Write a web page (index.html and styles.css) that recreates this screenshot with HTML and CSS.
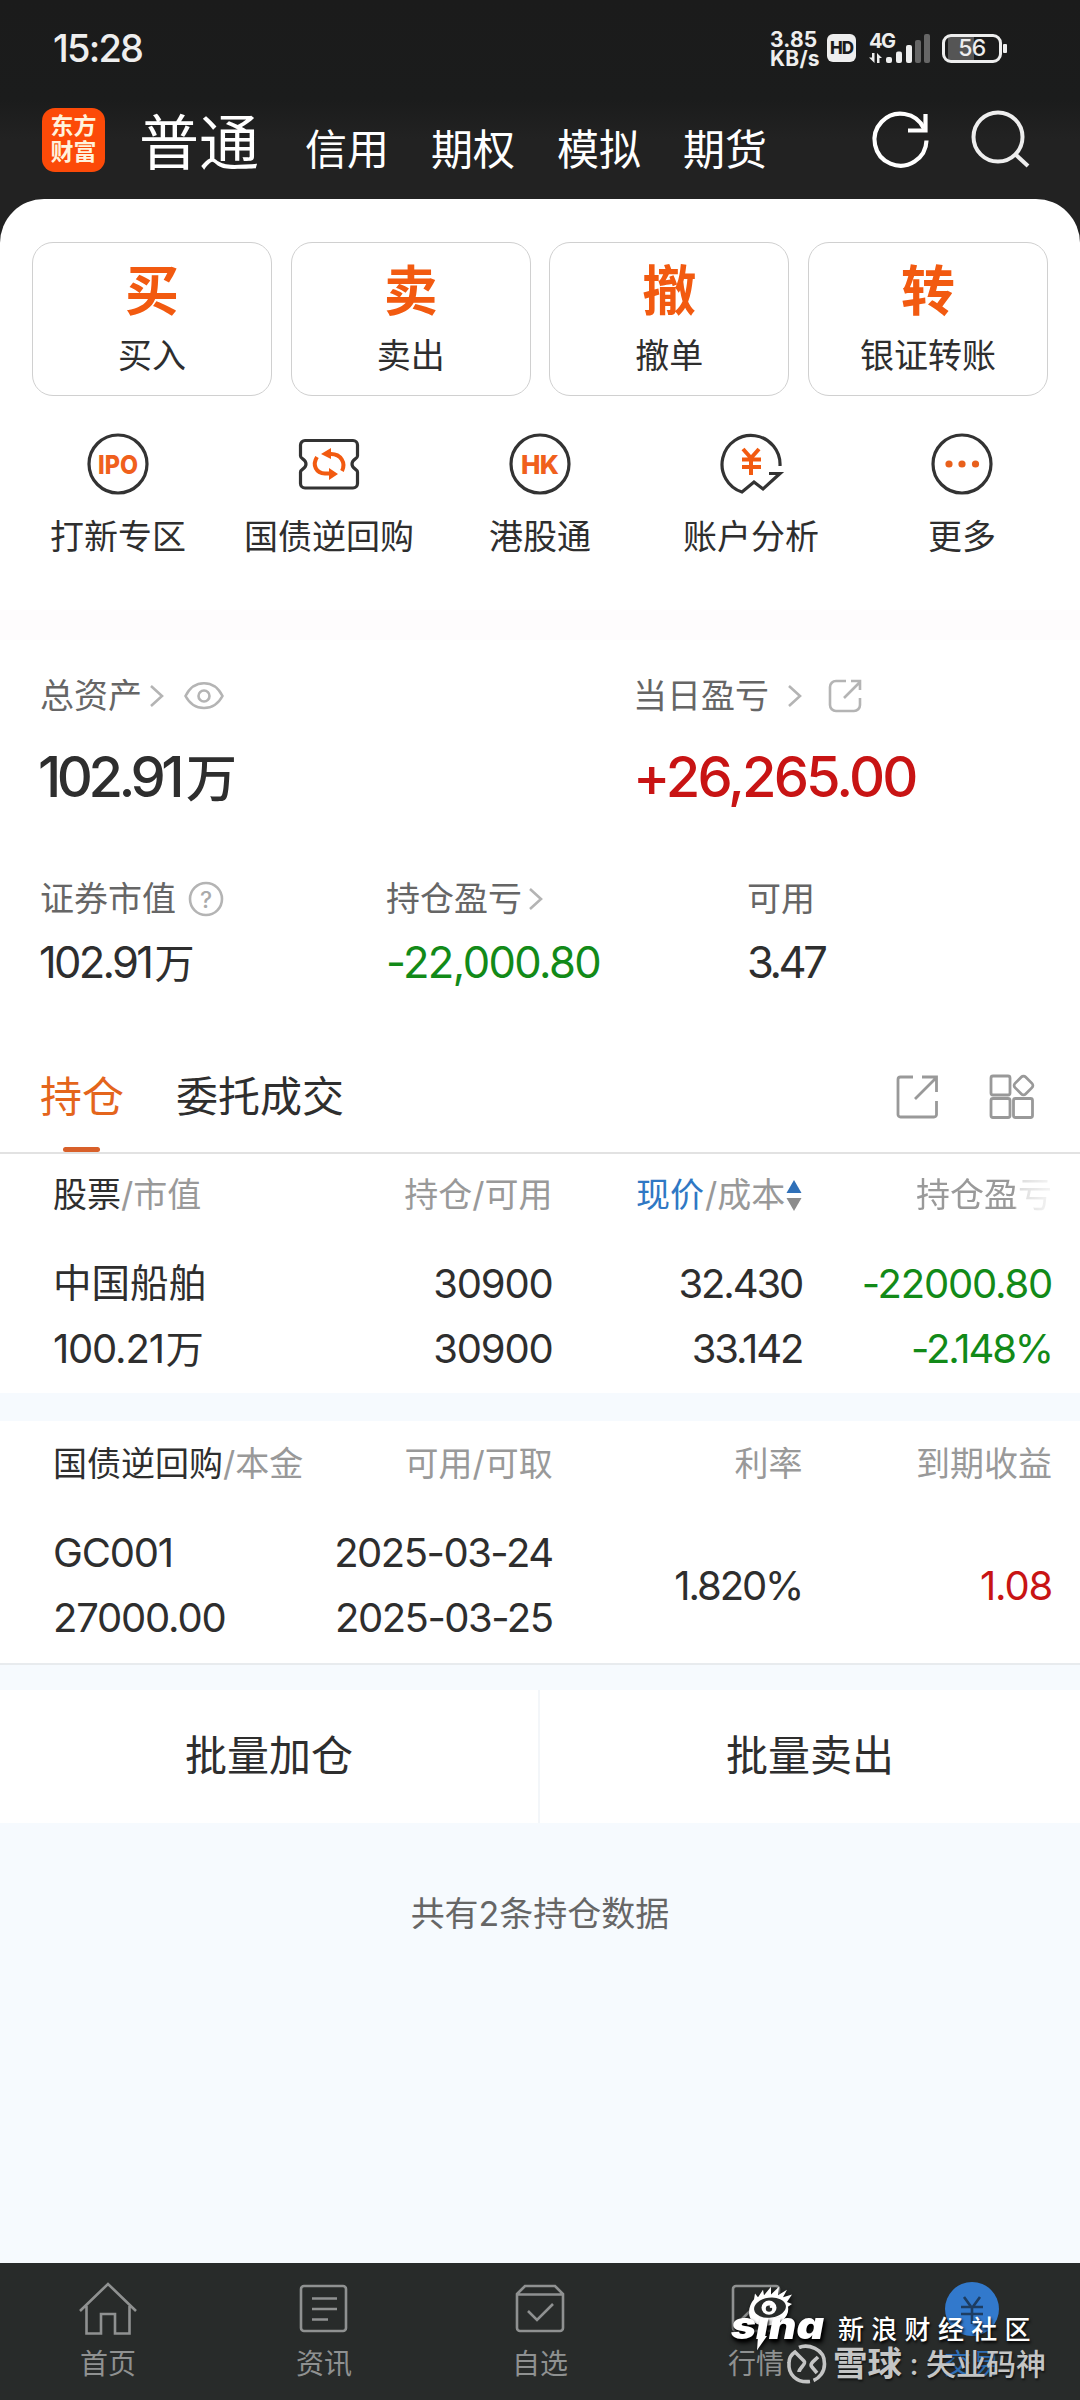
FILE: index.html
```html
<!DOCTYPE html>
<html lang="zh-CN">
<head>
<meta charset="utf-8">
<title>普通交易</title>
<link rel="stylesheet" href="styles.css">
</head>
<body>
<div class="app">
  <header class="top">
    <div class="status">
      <span class="clock">15:28</span>
      <div class="status-right">
        <span class="speed">3.85<br>KB/s</span>
        <span class="hd">HD</span>
        <svg class="signal" width="62" height="34" viewBox="0 0 62 34">
          <text class="net" x="0" y="17" textLength="27">4G</text>
          <g fill="#eee"><path d="M3 22h2.500v10L0 26.500h3zM8 32V22l5 5h-2.500v5z"/><rect x="17" y="26" width="6" height="6" rx="2"/><rect x="27" y="20.500" width="6" height="11.500" rx="2"/><rect x="37" y="14" width="6" height="18" rx="2"/></g>
          <g fill="#666"><rect x="46" y="9" width="6" height="23" rx="2"/><rect x="55" y="3" width="6" height="29" rx="2"/></g>
        </svg>
        <div class="battery"><span>56</span></div>
      </div>
    </div>
    <div class="titlebar">
      <div class="logo">东方<br>财富</div>
      <nav class="modes"><b>普通</b><span>信用</span><span>期权</span><span>模拟</span><span>期货</span></nav>
      <svg class="refresh" width="60" height="60" viewBox="0 0 60 60" fill="none" stroke="#fff" stroke-width="4.200"><path d="M56.500 30.500A26 26 0 1 1 54 18.500"/><path d="M55.500 4v16.500H38"/></svg>
      <svg class="search" width="60" height="60" viewBox="0 0 60 60" fill="none" stroke="#eee" stroke-width="4"><circle cx="28" cy="27" r="24.500"/><path d="M45 44l13 12"/></svg>
    </div>
  </header>

  <main class="sheet">
    <section class="trades">
      <div class="trade"><b>买</b><span>买入</span></div>
      <div class="trade"><b>卖</b><span>卖出</span></div>
      <div class="trade"><b>撤</b><span>撤单</span></div>
      <div class="trade"><b>转</b><span>银证转账</span></div>
    </section>
    <section class="services">
      <div class="service">
        <svg width="64" height="64" viewBox="0 0 64 64"><circle class="ink" cx="32" cy="32" r="29"/><text class="badge" x="32" y="41.500" text-anchor="middle" textLength="40" lengthAdjust="spacingAndGlyphs">IPO</text></svg>
        <span>打新专区</span>
      </div>
      <div class="service">
        <svg width="64" height="64" viewBox="0 0 64 64"><path class="ink" d="M8 8.500h48a4.500 4.500 0 0 1 4.500 4.500v11c0 3-5.500 3-5.500 8s5.500 5 5.500 8v11.500a4.500 4.500 0 0 1-4.500 4.500H8a4.500 4.500 0 0 1-4.500-4.500V40c0-3 5.500-3 5.500-8s-5.500-5-5.500-8V13A4.500 4.500 0 0 1 8 8.500z"/><g fill="none" stroke="#f25a10" stroke-width="4"><path d="M20 25c-5 8-1 16 8 16.500h5"/><path d="M31 22h3c10 0 15 9 11 17"/></g><path fill="#f25a10" d="M24 22l10-6v11zM41 42l-9 6V36z"/></svg>
        <span>国债逆回购</span>
      </div>
      <div class="service">
        <svg width="64" height="64" viewBox="0 0 64 64"><circle class="ink" cx="32" cy="32" r="29"/><text class="badge" x="32" y="41.500" text-anchor="middle" textLength="38">HK</text></svg>
        <span>港股通</span>
      </div>
      <div class="service">
        <svg width="64" height="64" viewBox="0 0 64 64"><path class="ink" d="M61 34A29 29 0 1 0 23 60l12-10 9 7 17-15.500H50"/><path fill="none" stroke="#f25a10" stroke-width="4" d="M24 17l8 9 8-9M32 25v18M23 27.500h19M23 35h19"/></svg>
        <span>账户分析</span>
      </div>
      <div class="service">
        <svg width="64" height="64" viewBox="0 0 64 64"><circle class="ink" cx="32" cy="32" r="29"/><g fill="#e8601c"><circle cx="19" cy="32" r="3.600"/><circle cx="32" cy="32" r="3.600"/><circle cx="45.500" cy="32" r="3.600"/></g></svg>
        <span>更多</span>
      </div>
    </section>

    <div class="seam"></div>

    <section class="summary">
      <div class="totals">
        <div class="figure">
          <div class="label">总资产<svg class="chev" width="14" height="24" viewBox="0 0 14 24"><path d="M1 2l11 10L1 22"/></svg><svg class="eye" width="40" height="30" viewBox="0 0 40 30"><path d="M1.500 15C10-2 30-2 38.500 15 30 31 10 31 1.500 15z"/><circle cx="20" cy="15" r="5.500"/></svg></div>
          <div class="big tight">102.91<i>万</i></div>
        </div>
        <div class="figure">
          <div class="label">当日盈亏<svg class="chev wide" width="14" height="24" viewBox="0 0 14 24"><path d="M1 2l11 10L1 22"/></svg><svg class="share-sm" width="34" height="34" viewBox="0 0 34 34"><path d="M18 2H8a6 6 0 0 0-6 6v18a6 6 0 0 0 6 6h18a6 6 0 0 0 6-6V19M16 19L32 3M23 2h9v9"/></svg></div>
          <div class="big up">+26,265.00</div>
        </div>
      </div>
      <div class="details">
        <div class="figure">
          <div class="label">证券市值<svg class="help" width="36" height="36" viewBox="0 0 36 36"><circle cx="18" cy="18" r="16"/><text x="18" y="26.500" text-anchor="middle">?</text></svg></div>
          <div class="mid tight">102.91<i>万</i></div>
        </div>
        <div class="figure">
          <div class="label">持仓盈亏<svg class="chev near" width="14" height="24" viewBox="0 0 14 24"><path d="M1 2l11 10L1 22"/></svg></div>
          <div class="mid down">-22,000.80</div>
        </div>
        <div class="figure">
          <div class="label">可用</div>
          <div class="mid cash">3.47</div>
        </div>
      </div>
    </section>

    <div class="tabs">
      <span class="tab active">持仓</span>
      <span class="tab">委托成交</span>
      <svg class="share" width="44" height="44" viewBox="0 0 44 44"><path d="M17 2H4.500A2.500 2.500 0 0 0 2 4.500v35A2.500 2.500 0 0 0 4.500 42H38a2.500 2.500 0 0 0 2.500-2.500V26M19 24L40 3M26 2h14.500v15"/></svg>
      <svg class="widgets" width="46" height="46" viewBox="0 0 46 46"><rect x="2" y="2" width="19" height="19" rx="2"/><rect x="2" y="24.500" width="19" height="19" rx="2"/><rect x="24.500" y="24.500" width="19" height="19" rx="2"/><rect x="27" y="4" width="15" height="15" rx="3" transform="rotate(45 34.500 11.500)"/></svg>
    </div>

    <section class="table stocks">
      <div class="cols head"><span><em>股票</em>/市值</span><span>持仓/可用</span><span class="sort"><a>现价</a>/成本<svg width="16" height="34" viewBox="0 0 16 34"><path fill="#2f70b8" d="M8 2l7.500 13H.5z"/><path fill="#8c8c8c" d="M8 33l7.500-13H.5z"/></svg></span><span class="fade">持仓盈亏</span></div>
      <div class="cols row"><span class="name">中国船舶</span><span>30900</span><span class="snug">32.430</span><span class="down">-22000.80</span></div>
      <div class="cols row"><span>100.21<i>万</i></span><span>30900</span><span class="snug">33.142</span><span class="down snug">-2.148%</span></div>
    </section>
    <section class="table bonds">
      <div class="cols head"><span><em>国债逆回购</em>/本金</span><span>可用/可取</span><span>利率</span><span>到期收益</span></div>
      <div class="cols pair">
        <div>GC001<br>27000.00</div><div class="dates">2025-03-24<br>2025-03-25</div><div class="snug">1.820%</div><div class="up">1.08</div>
      </div>
    </section>

    <section class="batch"><span>批量加仓</span><span>批量卖出</span></section>
    <p class="count">共有2条持仓数据</p>
  </main>

  <footer class="dock">
    <div class="item"><svg width="60" height="58" viewBox="0 0 60 58"><path d="M2 30L30 3l28 27M8.500 25v27.500H23V33h14v19.500h14.500V25"/></svg><span>首页</span></div>
    <div class="item"><svg width="60" height="58" viewBox="0 0 60 58"><rect x="7" y="5" width="45" height="45" rx="3"/><path d="M18 17.500h25M18 28h25M18 38.500h16"/></svg><span>资讯</span></div>
    <div class="item"><svg width="60" height="58" viewBox="0 0 60 58"><path d="M7 13l8-8h30l8 8v34a3 3 0 0 1-3 3H10a3 3 0 0 1-3-3zM7 13.500h46M18 30l9 9 16-16"/></svg><span>自选</span></div>
    <div class="item"><svg width="60" height="58" viewBox="0 0 60 58"><rect x="7" y="5" width="46" height="45" rx="3"/><path d="M16 38l11-11 7 7 11-13"/></svg><span>行情</span></div>
    <div class="item on"><svg width="60" height="58" viewBox="0 0 60 58"><circle cx="30" cy="28" r="27"/><path d="M22 16l8 11 8-11M30 27v16M19 26h22M19 33h22"/></svg><span>交易</span></div>

    <div class="mark sina">
      <svg width="98" height="72" viewBox="0 0 98 76" preserveAspectRatio="none">
        <path fill="#fff" d="M18 30c0-6 2-10 5-14l1-6 3 4 5-8 1 6 7-9v8l8-8-1 9 9-6-4 8 9-3-5 8 5 2-4 3c2 11-8 19-21 20-11 0-18-5-18-14z"/>
        <ellipse cx="39" cy="25" rx="16" ry="10.500" fill="#292c2b" transform="rotate(-8 39 25)"/>
        <circle cx="38" cy="25" r="7.500" fill="#fff"/><circle cx="38" cy="26" r="3.200" fill="#292c2b"/><circle cx="40" cy="24" r="1.300" fill="#fff"/>
        <text class="sina-word" x="0" y="58" textLength="93" lengthAdjust="spacingAndGlyphs">sına</text>
        <path fill="#fff" d="M27 55h9l-10 15z"/>
      </svg>
      <span>新浪财经社区</span>
    </div>
    <div class="mark xueqiu">
      <svg width="40" height="40" viewBox="0 0 40 40" fill="none" stroke="#c4c5c5" stroke-width="3.600"><path d="M12 3.500C20 0 38 4 37.500 20c0 8-5 14-11 16.500M23 37.500C9 39 1 30 2 19c0-5 3-9 6-11l9 9c3 3-5 7-5 11M31 13c-4 4-9 7-6 10l5 6"/></svg>
      <b>雪球</b><span class="colon">:</span><span>失业码神</span>
    </div>
  </footer>
</div>
</body>
</html>
```
FILE: styles.css
```css
* { box-sizing: border-box; }
body {
  margin: 0;
  background: #f6fafe;
  color: #2e2e2e;
  font-family: Inter, "Noto Sans CJK SC", sans-serif;
  font-size: 34px;
}
i, em { font-style: normal; }
svg { display: block; flex: none; overflow: visible; }
.app { width: 1080px; height: 2400px; display: flex; flex-direction: column; }

/* header */
.top { height: 199px; flex: none; background: linear-gradient(#1b1b1b, #1b1c1c 50%, #222 70%, #222); color: #fff; }
.status { height: 96px; display: flex; align-items: center; justify-content: space-between; padding: 0 78px 0 53px; }
.clock { font-size: 38px; font-weight: 500; letter-spacing: -1.800px; color: #eee; }
.status-right { display: flex; align-items: center; color: #eee; }
.speed { font-size: 21px; font-weight: 700; line-height: 19px; width: 57px; letter-spacing: .2px; margin-top: 2px; }
.hd { width: 29px; height: 28px; border-radius: 6px; background: #eee; color: #1b1b1b; font-size: 17px; font-weight: 800; line-height: 28px; text-align: center; letter-spacing: -1px; margin-right: 13px; }
.net { font: 700 20px Inter, sans-serif; fill: #eee; }
.battery { position: relative; width: 60px; height: 29px; margin-left: 11px; border: 3px solid #eee; border-radius: 9px; display: flex; align-items: center; justify-content: center; background: linear-gradient(90deg, transparent 3px, #555 3px, #555 29px, transparent 29px); }
.battery span { font-size: 23px; font-weight: 500; letter-spacing: -.5px; }
.battery::after { content: ""; position: absolute; right: -8px; top: 7px; width: 4px; height: 9px; border-radius: 1px; background: #eee; }
.titlebar { display: flex; height: 88px; align-items: center; padding: 0 50px 0 42px; }
.logo { width: 63px; height: 64px; border-radius: 13px; background: #fc4a08; color: #fff3dc; font-size: 23px; font-weight: 700; line-height: 26px; text-align: center; padding-top: 5px; }
.modes { display: flex; align-items: baseline; gap: 42px; margin: 13px 0 0 34px; line-height: 88px; font-size: 42px; }
.modes b { font-size: 60px; font-weight: 400; margin-right: 4px; }
.refresh { margin-left: auto; margin-right: 40px; }

/* quick actions */
.sheet { flex: 1; background: linear-gradient(#222 50px, transparent 50px); }
.trades { background: #fff; border-radius: 44px 44px 0 0; padding: 43px 32px 0; display: grid; grid-template-columns: repeat(4, 1fr); gap: 18.500px; height: 197px; }
.trade { border: 1.500px solid #d0d0d0; border-radius: 21px; display: flex; flex-direction: column; align-items: center; }
.trade b { font-size: 54px; line-height: 60px; color: #f25a10; font-weight: 700; margin-top: 19px; }
.trade span { line-height: 40px; margin-top: 14px; }
.services { background: #fff; display: grid; grid-template-columns: repeat(5, 211px); justify-content: center; padding: 36px 0 53px; }
.service { display: flex; flex-direction: column; align-items: center; gap: 21px; line-height: 40px; white-space: nowrap; }
.ink { fill: none; stroke: #333; stroke-width: 3.200; }
.badge { font: 800 26px Inter, sans-serif; fill: #f0601c; }
.seam { height: 30px; background: #fefcfd; }

/* asset summary */
.summary { background: #fff; height: 402px; padding: 36px 40px 0; }
.totals { display: grid; grid-template-columns: 593px 1fr; }
.details { display: grid; grid-template-columns: 346px 361px 1fr; margin-top: 70px; }
.label { display: flex; align-items: center; height: 40px; color: #666; line-height: 40px; }
.label svg { fill: none; stroke: #b4b4b4; stroke-width: 2.600; }
.chev { margin-left: 8px; }
.chev.wide { margin-left: 19px; }
.chev.near { margin-left: 7px; }
.eye { margin-left: 20px; }
.share-sm { margin-left: 26px; }
.help { margin-left: 12px; }
.help text { font: 500 23px Inter, sans-serif; fill: #aaa; stroke: none; }
.big { font-size: 56px; line-height: 60px; margin-top: 31px; font-weight: 500; letter-spacing: -2.900px; white-space: nowrap; }
.big.tight { letter-spacing: -4.500px; margin-left: -2px; }
.big i { font-size: 51px; letter-spacing: 0; margin-left: 6px; }
.mid { font-size: 43.500px; line-height: 50px; margin-top: 18px; letter-spacing: -1.600px; white-space: nowrap; }
.mid.tight { letter-spacing: -2.700px; margin-left: -1px; }
.mid.cash { letter-spacing: -3.400px; }
.mid i { font-size: 40px; letter-spacing: 0; margin-left: 3px; }
.up { color: #c81414; }
.down { color: #128a18; }

/* tabs */
.tabs { height: 112px; background: #fff; border-bottom: 2px solid #e2e2e2; display: flex; align-items: center; padding: 0 45px 0 40px; font-size: 42px; }
.tab { position: relative; line-height: 60px; margin-right: 52px; }
.active { color: #e4651c; }
.active::after { content: ""; position: absolute; left: 23px; bottom: -25px; width: 37px; height: 5px; border-radius: 3px; background: #d8602a; }
.tabs svg { fill: none; stroke: #999; stroke-width: 2.800; }
.share { margin-left: auto; }
.widgets { margin-left: 49px; }

/* holdings */
.table { background: #fff; }
.cols { display: grid; grid-template-columns: repeat(4, 1fr); padding: 0 28px 0 53px; white-space: nowrap; }
.cols > * { text-align: right; }
.cols > :first-child { text-align: left; }
.head { color: #999; line-height: 40px; height: 40px; }
.head em { color: #2e2e2e; }
.head a { color: #2f78c4; }
.sort { display: flex; justify-content: flex-end; align-items: center; gap: 1px; }
.fade { -webkit-mask-image: linear-gradient(90deg, #000 85%, rgba(0,0,0,.35) 86%, rgba(0,0,0,.1)); mask-image: linear-gradient(90deg, #000 85%, rgba(0,0,0,.35) 86%, rgba(0,0,0,.1)); }
.row, .pair { font-size: 40px; letter-spacing: -1.200px; }
.snug { letter-spacing: -2.100px; }
.dates { letter-spacing: -1.500px; }
.row { line-height: 65px; height: 65px; }
.row i { font-size: 38px; letter-spacing: 0; margin-left: 2px; }
.row .name { font-size: 38.500px; letter-spacing: 0; }
.stocks { height: 239px; padding-top: 21px; }
.stocks .head { margin-bottom: 36px; }
.bonds { margin-top: 28px; height: 244px; padding-top: 23px; border-bottom: 2px solid #e8ebee; }
.pair { line-height: 65px; margin-top: 36px; align-items: center; }

.batch { margin-top: 25px; height: 133px; display: grid; grid-template-columns: 1fr 1fr; background: #fff; font-size: 42px; text-align: center; line-height: 132px; }
.batch span:first-child { border-right: 2px solid #f3f6f9; }
.count { margin: 71px 0 0; text-align: center; line-height: 40px; color: #666; }

/* bottom bar */
.dock { position: relative; flex: none; height: 137px; background: #282b2a; display: grid; grid-template-columns: repeat(5, 1fr); color: #8f9191; font-size: 28px; }
.item { display: flex; flex-direction: column; align-items: center; padding-top: 18px; }
.item span { line-height: 36px; margin-top: 7px; }
.item svg { fill: none; stroke: #8f9191; stroke-width: 2.600; }
.on { color: #2f6fb8; }
.item.on svg { stroke: #1d3d62; }
.on circle { fill: #3279cc; stroke: none; }
.mark { position: absolute; display: flex; align-items: center; white-space: nowrap; }
.sina { left: 731px; top: 21px; color: #fff; font-size: 26px; font-weight: 500; letter-spacing: 7.300px; text-shadow: 1px 2px 3px #000; }
.sina svg { filter: drop-shadow(1px 2px 2px #000); }
.sina span { margin-left: 9px; margin-top: 14px; }
.sina-word { font: italic 900 40px Inter, sans-serif; letter-spacing: 0; fill: #fff; }
.xueqiu { left: 787px; top: 81px; color: #c4c5c5; font-size: 30px; font-weight: 500; line-height: 40px; text-shadow: 1px 2px 2px #0008; }
.xueqiu b { font-size: 34.500px; font-weight: 700; margin-left: 6px; }
.colon { width: 24px; text-align: center; }
```
